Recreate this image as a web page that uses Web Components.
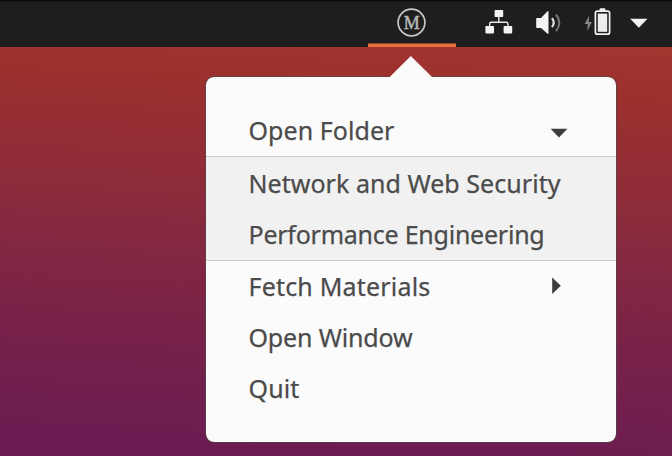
<!DOCTYPE html>
<html lang="en">
<head>
<meta charset="utf-8">
<title>Indicator menu</title>
<style>
html, body { margin: 0; height: 100%; overflow: hidden; }
body { font-family: "Noto Sans", "Open Sans", sans-serif; }
</style>
</head>
<body>
<desktop-screen>
  <top-bar slot="bar"></top-bar>
  <popup-menu>
    <menu-item width="144" arrow="down">Open Folder</menu-item>
    <menu-group>
      <menu-item width="310">Network and Web Security</menu-item>
      <menu-item width="294">Performance Engineering</menu-item>
    </menu-group>
    <menu-item width="180" arrow="right">Fetch Materials</menu-item>
    <menu-item width="162">Open Window</menu-item>
    <menu-item width="49">Quit</menu-item>
  </popup-menu>
</desktop-screen>
<script>
const attach = (el, html) => {
  const t = document.createElement('template');
  t.innerHTML = html;
  const root = el.attachShadow({ mode: 'open' });
  root.append(t.content.cloneNode(true));
  return root;
};

customElements.define('desktop-screen', class extends HTMLElement {
  constructor() {
    super();
    attach(this, `<style>
      :host { display: flex; flex-direction: column; width: 672px; height: 456px; overflow: hidden;
        background: linear-gradient(183deg, #a4362f 8%, #9b302e 21%, #922d36 36%, #842841 55%, #782249 73%, #701e50 88%, #6a1b52 100%); }
      main { padding: 9px 0 0 205px; }
    </style><slot name="bar"></slot><main><slot></slot></main>`);
  }
});

/* Panel icons share the full height of the bar, so y coordinates are bar coordinates. */
customElements.define('top-bar', class extends HTMLElement {
  constructor() {
    super();
    attach(this, `<style>
      :host { display: flex; justify-content: flex-end; box-sizing: border-box; height: 47px; flex: none;
        background: linear-gradient(#0b0b0b 0 1px, #1e1e1e 2px); padding-right: 20px; }
      svg { display: block; height: 47px; flex: none; }
      .active { width: 88px; margin-right: 28px; box-shadow: inset 0 -3.5px #e66f3a; }
      text { font: 19px "Liberation Serif", serif; }
    </style>
    <div class="active"><svg width="88" viewBox="368 0 88 47">
      <circle cx="411.5" cy="22.5" r="13.4" fill="none" stroke="#c8c8c8" stroke-width="1.7"/>
      <text x="411.7" y="28.8" text-anchor="middle" fill="#b8b8b8" stroke="#b8b8b8" stroke-width=".5" textLength="16" lengthAdjust="spacingAndGlyphs">M</text>
    </svg></div>
    <svg width="46" viewBox="484 0 46 47" fill="#f3f3f3">
      <rect x="494.6" y="10" width="8.6" height="7" rx=".8"/>
      <rect x="485.4" y="26" width="8.6" height="7.4" rx=".8"/>
      <rect x="503.6" y="26" width="8.6" height="7.4" rx=".8"/>
      <path d="M498.8 16v6M489.7 27v-3.2q0-1.5 1.5-1.5h15.2q1.5 0 1.5 1.5V27" fill="none" stroke="#e8e8e8" stroke-width="1.4"/>
    </svg>
    <svg width="50" viewBox="530 0 50 47">
      <path d="M537 18h4l6.5-6.8h1v22.6h-1L541 28h-4q-.8 0-.8-.8v-8.4q0-.8.8-.8z" fill="#f3f3f3"/>
      <path d="M552 18.2q3.4 4.4 0 9" fill="none" stroke="#dcdcdc" stroke-width="2.2"/>
      <path d="M556 14.5q6.6 8.2 0 16.6" fill="none" stroke="#777" stroke-width="2"/>
    </svg>
    <svg width="72" viewBox="580 0 72 47">
      <path d="M589.2 15.5L584.6 24h3.2L587.2 31l4.7-9h-3.2z" fill="#858585"/>
      <rect x="595.4" y="11.2" width="14.2" height="23" rx="2" fill="none" stroke="#f0f0f0" stroke-width="1.7"/>
      <rect x="599.6" y="8.3" width="5.8" height="3" rx="1" fill="#f0f0f0"/>
      <rect x="597.8" y="13.6" width="9.4" height="18.2" fill="#ededed"/>
      <path d="M630.2 18.7h17.3L638.8 27.8z" fill="#f3f3f3"/>
    </svg>`);
  }
});

customElements.define('popup-menu', class extends HTMLElement {
  constructor() {
    super();
    attach(this, `<style>
      :host { display: block; width: 412px; }
      .tip { display: block; margin: 0 0 -2px 184px; position: relative; }
      .body { box-sizing: border-box; width: 412px; height: 367px; border: 1px solid rgba(80,70,72,.7);
        border-radius: 9px; background: #fbfbfb; background-clip: padding-box; overflow: hidden; padding: 28px 0; }
    </style>
    <svg class="tip" width="44" height="22" viewBox="0 0 44 22">
      <path d="M1 22V20.8L21.8 0L42.8 20.8V22z" fill="#fbfbfb"/>
    </svg>
    <div class="body"><slot></slot></div>`);
  }
});

customElements.define('menu-group', class extends HTMLElement {
  constructor() {
    super();
    attach(this, `<style>
      :host { display: block; box-sizing: border-box; height: 105px; background: #f1f1f1;
        border: solid #cbcbcb; border-width: 1.5px 0; padding-top: 1px; }
    </style><slot></slot>`);
  }
});

customElements.define('menu-item', class extends HTMLElement {
  constructor() {
    super();
    const arrow = {
      down: '<svg width="18" height="10" viewBox="0 0 18 10" style="margin-top:4px"><path d="M.6.7h16.8L9 9.6z"/></svg>',
      right: '<svg width="9" height="18" viewBox="0 0 9 18" style="margin:-1px 7px 0 0"><path d="M.2.5v16.6L8.8 8.8z"/></svg>'
    }[this.getAttribute('arrow')] || '';
    this.label = attach(this, `<style>
      :host { display: flex; align-items: center; justify-content: space-between; box-sizing: border-box;
        height: 51px; padding: 0 48px 0 42.5px; font-size: 25px; line-height: 34px; color: #4b4b4b; }
      span { white-space: nowrap; padding-bottom: 2px; -webkit-text-stroke: .25px #4b4b4b; }
      svg { fill: #3c3c3c; }
    </style><span><slot></slot></span>${arrow}`).querySelector('span');
  }
  /* Tracks the label out or in so that it fills its declared width. */
  connectedCallback() {
    const natural = this.label.getBoundingClientRect().width;
    const target = Number(this.getAttribute('width')) + 2;
    this.label.style.letterSpacing = (target - natural) / this.textContent.length + 'px';
  }
});
</script>
</body>
</html>
